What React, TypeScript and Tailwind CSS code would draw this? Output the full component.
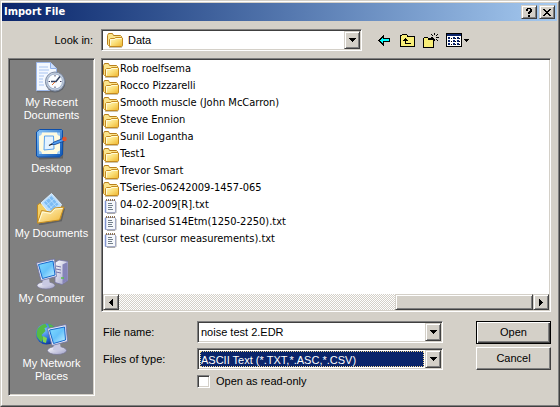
import type { ReactNode } from "react";

const raised =
  "border border-t-[#d4d0c8] border-l-[#d4d0c8] border-r-[#404040] border-b-[#404040] bg-[#d4d0c8] shadow-[inset_1px_1px_0_#fff,inset_-1px_-1px_0_#808080]";
const sunken =
  "border border-t-[#808080] border-l-[#808080] border-r-white border-b-white shadow-[inset_1px_1px_0_#404040,inset_-1px_-1px_0_#d4d0c8]";
const tahoma = "font-['DejaVu_Sans_Condensed','DejaVu_Sans',sans-serif] font-stretch-condensed";

function Arrow({ dir }: { dir: "down" | "left" | "right" }) {
  const d = { down: "M0 0h7v1h-1v1h-1v1h-1v1h-1v-1h-1v-1h-1v-1h-1z", left: "M4 0v7h-1v-1h-1v-1h-1v-1h-1v-1h1v-1h1v-1h1v-1z", right: "M0 0v7h1v-1h1v-1h1v-1h1v-1h-1v-1h-1v-1h-1v-1z" }[dir];
  return (
    <svg className="shrink-0" width={dir === "down" ? 7 : 4} height={dir === "down" ? 4 : 7} shapeRendering="crispEdges" aria-hidden="true">
      <path d={d} />
    </svg>
  );
}

function Folder() {
  return (
    <svg className="size-4 shrink-0" viewBox="0 0 16 16" aria-hidden="true">
      <path d="M2 15.500h12.500l1-1.500V6" fill="none" stroke="#9a8a60" strokeOpacity=".5" />
      <path d="M.5 12.500V3.500l1-2h4l1 2h7l1 1v8.500l-1 .5h-12z" fill="#fbe48c" stroke="#b8801c" />
      <path d="M2.500 14.500V7.500l1-1h4l1-1h6.500l.5 .5v7.500l-1 1z" fill="url(#folder)" stroke="#c48a20" />
      <path d="M3.500 13.500v-6h4.500l1-1h5.500" fill="none" stroke="#fffbd8" />
    </svg>
  );
}

function Note() {
  return (
    <svg className="size-4 shrink-0" viewBox="0 0 16 16" aria-hidden="true">
      <path d="M4 15.500h8l1-1V4" fill="none" stroke="#aaa" />
      <path d="M2.500 2.500h9.500l.5 .5v11.500h-10z" fill="#f6f8fc" stroke="#a4aac4" />
      <path d="M2.500 3v11.500" stroke="#8296d2" strokeWidth="1.500" />
      <path d="M5 5.500h4M5 7.500h5M5 9.500h4M5 11.500h5" stroke="#73808c" />
      <path d="M3.500 1v2M5.500 1v2M7.500 1v2M9.500 1v2M11.500 1v2" stroke="#8c7150" />
    </svg>
  );
}

function Defs() {
  return (
    <svg className="absolute size-0" aria-hidden="true">
      <defs>
        <linearGradient id="folder" x1="0" y1="0" x2="1" y2="1">
          <stop offset="0" stopColor="#fffbd0" />
          <stop offset=".5" stopColor="#fbe07a" />
          <stop offset="1" stopColor="#eeb42c" />
        </linearGradient>
        <linearGradient id="screen" x1="0" y1="0" x2="1" y2="1">
          <stop offset="0" stopColor="#7fdcff" />
          <stop offset=".5" stopColor="#66c2fa" />
          <stop offset="1" stopColor="#c8f2ff" />
        </linearGradient>
        <linearGradient id="gold" x1="0" y1="0" x2="1" y2="1">
          <stop offset="0" stopColor="#fffad0" />
          <stop offset="1" stopColor="#f2b632" />
        </linearGradient>
        <linearGradient id="metal" x1="0" y1="0" x2="1" y2="1">
          <stop offset="0" stopColor="#fff" />
          <stop offset="1" stopColor="#9e9fc8" />
        </linearGradient>
        <linearGradient id="desk" x1="0" y1="0" x2="1" y2="1">
          <stop offset="0" stopColor="#86c4f8" />
          <stop offset="1" stopColor="#0d55b4" />
        </linearGradient>
        <radialGradient id="globe" cx=".35" cy=".3" r=".8">
          <stop offset="0" stopColor="#85c6ff" />
          <stop offset=".6" stopColor="#2368d6" />
          <stop offset="1" stopColor="#0a2c86" />
        </radialGradient>
      </defs>
    </svg>
  );
}

function RecentIcon() {
  return (
    <svg className="size-8" viewBox="3 0 32 32" aria-hidden="true">
      <path d="M4 29.500h18" stroke="#555" strokeOpacity=".5" strokeWidth="1.500" />
      <path d="M3.500 .5h14l6 6v22h-20z" fill="#f3f8ff" stroke="#9db9ec" />
      <path d="M17.500 .5v6h6" fill="#cfe0fb" stroke="#8fb0ea" />
      <path d="M6 5h9M6 8h10M6 11h9M6 14h5M6 17h4M6 20h4M6 23h5" stroke="#a8c4f2" />
      <circle cx="22.500" cy="20.500" r="10" fill="#5f646c" />
      <circle cx="22" cy="19.500" r="9.500" fill="#c3cedd" stroke="#7e8da6" />
      <circle cx="22" cy="19.500" r="7.500" fill="#fafdff" stroke="#9db0cb" />
      <path d="M22 13v1.500M22 24.500v1.500M15.500 19.500h1.500M27 19.500h1.500" stroke="#446" />
      <path d="M18 19.500h5l4-5" fill="none" stroke="#33415f" strokeWidth="1.500" />
      <path d="M22 20l-3 3" stroke="#e07030" />
    </svg>
  );
}

function DesktopIcon() {
  return (
    <svg className="size-8" viewBox="2 0 32 32" aria-hidden="true">
      <path d="M5 30.500l23-1 1-20" fill="none" stroke="#444" strokeOpacity=".5" strokeWidth="2" />
      <path d="M2.500 4l3-2.500h22l1 1v24l-3 2.500h-21.500l-1.500-1z" fill="url(#desk)" stroke="#0c4eaa" />
      <path d="M5 4.500h21v21.500H5z" fill="#9fcdf6" />
      <path d="M8 4.500h15q0 3 3 3.500v14.500q-3 .5-3 3.500H8q0-3-3-3.500V8Q8 7.500 8 4.500z" fill="#fffbe0" />
      <path d="M10.500 8h9l.5 13-10 1z" fill="#e4f3ff" stroke="#5aa2ec" />
      <path d="M17 16.500l3-2.500 9-3.500 1.500 2.500-9.500 3.500z" fill="#4d9cf0" stroke="#123f8c" strokeWidth=".8" />
      <circle cx="30.500" cy="11" r="2.300" fill="#e45328" />
      <path d="M15 17.500l3-1.500" stroke="#222" strokeWidth="1.300" />
    </svg>
  );
}

function DocumentsIcon() {
  return (
    <svg className="size-8" viewBox="3 0 32 32" aria-hidden="true">
      <path d="M6 31.500l22-4 3-12" fill="none" stroke="#444" strokeOpacity=".5" strokeWidth="2" />
      <path d="M4.500 30V12l2-1.500 5 1 2-1.500 14 3 2 2-2 11z" fill="#f4cf66" stroke="#c08a20" />
      <path d="M18.500 .5l10 11-8 14L8 10z" fill="#b9defe" stroke="#dff1ff" />
      <path d="M18.500 3l7 8.500-7.500 6-7-8z" fill="#7dbcf4" />
      <path d="M13 8l6 7M16 5l7 8M13 13l8-7M16 16l8-7" stroke="#c5e7ff" strokeWidth=".7" />
      <path d="M4.500 30l4-12.500 9 1.500 4-4 9.500-1-4.500 13z" fill="url(#gold)" stroke="#c58e22" />
      <path d="M6 28.500L9.500 19l8.500 1.500 4-4.500 7.500-.5" fill="none" stroke="#fffbd8" />
    </svg>
  );
}

function ComputerIcon() {
  return (
    <svg className="size-8" viewBox="1 0 32 32" aria-hidden="true">
      <path d="M20 4.500l4-2.500 9 1.500v19l-6 4-7-2z" fill="url(#metal)" stroke="#7675a6" strokeWidth=".8" />
      <path d="M27.500 6.500v19l5-3V4z" fill="#8584b8" />
      <path d="M21 8l5 1M21 11l5 1M21 14l5 1" stroke="#7776aa" />
      <path d="M26 20h3" stroke="#57bf4c" strokeWidth="1.500" />
      <ellipse cx="11" cy="27.500" rx="9" ry="3.500" fill="url(#metal)" stroke="#777796" strokeWidth=".7" />
      <path d="M8 20h6l1 7q-4 1.500-8 0z" fill="#c8c9e2" />
      <path d="M1.500 5l18-4 2 17.500-15.500 4z" fill="#e7e9f6" stroke="#6c70a2" strokeWidth=".8" />
      <path d="M3.500 6.500l14.500-3.500 2 14-12.500 3.500z" fill="url(#screen)" stroke="#1667cc" />
    </svg>
  );
}

function NetworkIcon() {
  return (
    <svg className="size-8" viewBox="1 0 32 32" aria-hidden="true">
      <circle cx="11.500" cy="11" r="10.500" fill="url(#globe)" />
      <path d="M2.500 6q4-5 8-5l2 3-3 1 1 3-4 4 2 3-2 4q-5-4-5-8zM13 1q4 0 7 4l-5 1z" fill="#55ba45" />
      <path d="M8 13l4 2-1 5-3-1z" fill="#82d452" />
      <ellipse cx="22" cy="27.500" rx="9.500" ry="4" fill="url(#metal)" stroke="#777796" strokeWidth=".7" />
      <path d="M19 20h6l1 7q-4 1.500-8 0z" fill="#c8c9e2" />
      <path d="M12.500 5.500l18.500-4 1.500 17-15.500 4z" fill="#e7e9f6" stroke="#6c70a2" strokeWidth=".8" />
      <path d="M14.500 7l15-3 1 13-12 3.500z" fill="url(#screen)" stroke="#1667cc" />
    </svg>
  );
}

function Place({ icon, children, className }: { icon: ReactNode; children: ReactNode; className: string }) {
  return (
    <button type="button" className={`flex w-full flex-col items-center gap-0.5 leading-[13px] text-white ${className}`}>
      {icon}
      <span>{children}</span>
    </button>
  );
}

function DropButton() {
  return (
    <span className={`pointer-events-none flex w-4 shrink-0 items-center justify-center ${raised}`}>
      <Arrow dir="down" />
    </span>
  );
}

const folders = ["Rob roelfsema", "Rocco Pizzarelli", "Smooth muscle (John McCarron)", "Steve Ennion", "Sunil Logantha", "Test1", "Trevor Smart", "TSeries-06242009-1457-065"];
const files = ["04-02-2009[R].txt", "binarised S14Etm(1250-2250).txt", "test (cursor measurements).txt"];
const selectBase = "min-w-0 grow appearance-none outline-none";

export default function App() {
  return (
    <main className="border border-t-[#d4d0c8] border-l-[#d4d0c8] border-r-[#404040] border-b-[#404040] bg-[#d4d0c8] font-['Liberation_Sans',sans-serif] text-[11px] text-black">
      <Defs />
      <div className="border border-t-white border-l-white border-r-[#808080] border-b-[#808080] pt-px pr-px pb-[9px]">
        <header className={`flex h-[18px] items-center bg-linear-to-r from-[#0a246a] to-[#a6caf0] pr-0.5 pl-0.5 text-white ${tahoma}`}>
          <h1 className="grow text-[11px] font-bold">Import File</h1>
          <button type="button" aria-label="Help" className={`flex h-3.5 w-4 items-center justify-center text-black ${raised}`}>
            <svg width="6" height="9" shapeRendering="crispEdges"><path d="M1 0h4v1h1v3h-1v1h-1v1H2V4h1V3h1V1H2v2H0V1h1zM2 7h2v2H2z" /></svg>
          </button>
          <button type="button" aria-label="Close" className={`ml-0.5 flex h-3.5 w-4 items-center justify-center ${raised}`}>
            <svg width="8" height="7" shapeRendering="crispEdges"><path d="M0 0h2v1h1v1h2V1h1V0h2v1H7v1H6v1H5v1h1v1h1v1h1v1H6V6H5V5H3v1H2v1H0V6h1V5h1V4h1V3H2V2H1V1H0z" /></svg>
          </button>
        </header>

        <div className="flex h-[37px] items-start pt-2">
          <label htmlFor="look" className="w-[99px] pr-2 text-right leading-[22px]">Look in:</label>
          <div className={`flex h-[22px] w-[261px] bg-white p-px ${sunken}`}>
            <span className="flex items-center pl-1"><Folder /></span>
            <select id="look" className={`${selectBase} pl-[5px]`}><option>Data</option></select>
            <DropButton />
          </div>
          <div className="flex h-[22px] items-center pl-4">
            <button type="button" aria-label="Back">
              <svg width="13" height="11" shapeRendering="crispEdges"><path d="M6 0v3h6v4H6v4H5v-1H4V9H3V8H2V7H1V6H0V5h1V4h1V3h1V2h1V1h1V0z" /><path d="M5 2v2h6v2H5v2H4V7H3V6H2V5h1V4h1V3h1z" fill="#0ff" /></svg>
            </button>
            <button type="button" aria-label="Up one level" className="ml-[9px]">
              <svg width="15" height="13" shapeRendering="crispEdges"><path d="M1 1h1V0h5v1h1v1h7v11H0V1z" /><path d="M2 1h5v2h7v9H1V2h1z" fill="#f8ee78" /><path d="M5 4h1v1h1v1h1v1H6v2h5v1H5V7H3V6h1V5h1z" /></svg>
            </button>
            <button type="button" aria-label="New folder" className="ml-2">
              <svg width="16" height="15" shapeRendering="crispEdges"><path d="M1 5V4h4v1h6v10H0V5z" /><path d="M1 5h4v2h5v7H1z" fill="#f8ee78" /><path d="M11 0h1v2h-1zM11 6h1v2h-1zM8 4h2v1H8zM13 4h3v1h-3zM9 2h1v1H9zM13 2h1v1h-1zM14 1h1v1h-1zM13 6h1v1h-1zM14 7h1v1h-1zM8 1h1v1H8z" /></svg>
            </button>
            <button type="button" aria-label="View menu" className="ml-[7px] flex items-center gap-0.5">
              <svg width="16" height="14" shapeRendering="crispEdges">
                <path d="M0 0h16v14H0z" /><path d="M1 3h14v10H1z" fill="#fff" /><path d="M1 1h14v2H1z" fill="#0a246a" />
                <path d="M2 4h2v2H2zM7 4h2v2H7zM11 4h2v2h-2zM2 7h2v2H2zM7 7h2v2H7zM11 7h2v2h-2zM2 10h2v2H2zM7 10h2v2H7zM11 10h2v2h-2z" fill="#0a246a" />
                <path d="M5 5h1M9 5h1M13 5h1M5 8h1M9 8h1M13 8h1M5 11h1M9 11h1M13 11h1" stroke="#000" />
              </svg>
              <svg width="5" height="3" shapeRendering="crispEdges"><path d="M0 0h5v1H4v1H3v1H2V2H1V1H0z" /></svg>
            </button>
          </div>
        </div>

        <div className="flex gap-1.5 pr-1.5 pl-1.5">
          <nav className={`flex h-[338px] w-[87px] shrink-0 flex-col bg-[#808080] pt-[3px] ${sunken}`}>
            <Place className="h-[66px]" icon={<RecentIcon />}>My Recent<br />Documents</Place>
            <Place className="h-[65px]" icon={<DesktopIcon />}>Desktop</Place>
            <Place className="h-[65px]" icon={<DocumentsIcon />}>My Documents</Place>
            <Place className="h-[65px]" icon={<ComputerIcon />}>My Computer</Place>
            <Place className="h-[65px]" icon={<NetworkIcon />}>My Network<br />Places</Place>
          </nav>

          <div className="flex min-w-0 grow flex-col">
            <section className={`flex h-[254px] flex-col bg-white p-px ${sunken} ${tahoma}`}>
              <ul className="grow pt-px">
                {folders.map((name) => (
                  <li key={name} className="flex h-[17px] items-center gap-px whitespace-nowrap"><Folder />{name}</li>
                ))}
                {files.map((name) => (
                  <li key={name} className="flex h-[17px] items-center gap-px whitespace-nowrap"><Note />{name}</li>
                ))}
              </ul>
              <div className="flex h-4 bg-[repeating-conic-gradient(#fff_0_25%,#d4d0c8_0_50%)] bg-size-[2px_2px]">
                <button type="button" aria-label="Scroll left" className={`flex w-4 items-center justify-center ${raised}`}><Arrow dir="left" /></button>
                <div className={`ml-auto w-[31%] ${raised}`} />
                <button type="button" aria-label="Scroll right" className={`flex w-4 items-center justify-center ${raised}`}><Arrow dir="right" /></button>
              </div>
            </section>

            <form className="flex items-start justify-between pt-[9px]" onSubmit={(e) => e.preventDefault()}>
              <div className="grid grid-cols-[94px_246px] gap-y-[5px] pl-0.5">
                <label htmlFor="name" className="leading-[22px]">File name:</label>
                <div className={`flex h-[22px] bg-white p-px ${sunken}`}>
                  <input id="name" defaultValue="noise test 2.EDR" className="min-w-0 grow pl-0.5 outline-none" />
                  <DropButton />
                </div>
                <label htmlFor="type" className="leading-[22px]">Files of type:</label>
                <div className={`flex h-[22px] bg-white p-px ${sunken}`}>
                  <select id="type" className={`${selectBase} m-px border border-dotted border-[#f5db95] bg-[#0a246a] text-white`}><option>ASCII Text (*.TXT,*.ASC,*.CSV)</option></select>
                  <DropButton />
                </div>
                <label className="col-start-2 flex h-[13px] items-center gap-1.5">
                  <input type="checkbox" className={`size-[13px] appearance-none bg-white ${sunken}`} />
                  Open as read-only
                </label>
              </div>
              <div className="flex w-[75px] flex-col gap-[3px]">
                <button type="submit" className="h-[23px] border border-black bg-[#d4d0c8] shadow-[inset_1px_1px_0_#fff,inset_-1px_-1px_0_#404040,inset_-2px_-2px_0_#808080]">Open</button>
                <button type="button" className="h-[23px] border border-t-white border-l-white border-r-[#404040] border-b-[#404040] bg-[#d4d0c8] shadow-[inset_-1px_-1px_0_#808080]">Cancel</button>
              </div>
            </form>
          </div>
        </div>
      </div>
    </main>
  );
}
